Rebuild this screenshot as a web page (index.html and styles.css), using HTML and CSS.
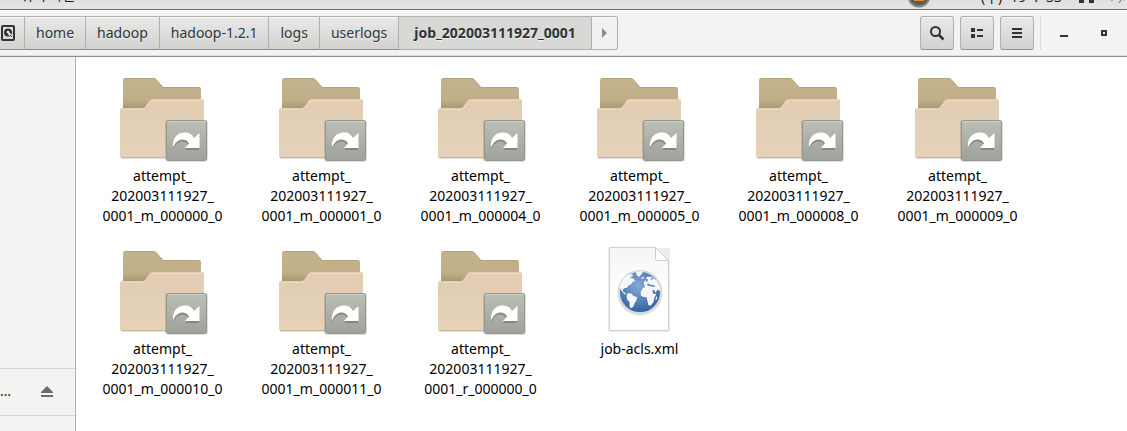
FILE: index.html
```html
<!DOCTYPE html>
<html lang="ko">
<head>
<meta charset="utf-8">
<title>job_202003111927_0001</title>
<link rel="stylesheet" href="styles.css">
</head>
<body>
<svg class="defs" aria-hidden="true">
  <defs>
    <linearGradient id="back" x1="0" y1="0" x2="0" y2="1"><stop offset="0" stop-color="#c5b38e"/><stop offset=".65" stop-color="#bfae88"/><stop offset="1" stop-color="#a08d69"/></linearGradient>
    <linearGradient id="front" x1="0" y1="0" x2="0" y2="1"><stop offset="0" stop-color="#e2cdb3"/><stop offset="1" stop-color="#e5d2b8"/></linearGradient>
    <linearGradient id="badge" x1="0" y1="0" x2="0" y2="1"><stop offset="0" stop-color="#bbbfb6"/><stop offset="1" stop-color="#9fa29a"/></linearGradient>
    <linearGradient id="paper" x1="0" y1="0" x2="0" y2="1"><stop offset="0" stop-color="#f5f5f4"/><stop offset=".6" stop-color="#ffffff"/></linearGradient>
    <radialGradient id="sea" cx=".45" cy=".35" r=".7"><stop offset="0" stop-color="#84aad8"/><stop offset="1" stop-color="#2b5c9c"/></radialGradient>
    <symbol id="folder" viewBox="0 0 96 96">
      <rect x="6" y="86" width="83" height="3" rx="1" fill="#000" opacity=".12"/>
      <path d="M8 42V10q0-2 2-2h28q2 0 3 1l7 8h36q2 0 2 2v23z" fill="url(#back)"/>
      <path d="M10 8.500h28q2 0 3 1l7 8h36" fill="none" stroke="#b3a27d"/>
      <path d="M5 86V40q0-2 2-2h20q2 0 3-1l5-7q1-1 3-1h49q2 0 2 2v55q0 2-2 2H7q-2 0-2-2z" fill="url(#front)"/>
      <path d="M6 87.500h82" stroke="#cbb597"/>
      <path d="M6 39.500h21q3 0 4-2l5-6q1-1 3-1h48" fill="none" stroke="#ead9c2"/>
      <rect x="50" y="50" width="43" height="42" rx="3" fill="#000" opacity=".12"/>
      <rect x="51.500" y="50.500" width="40" height="40" rx="2" fill="url(#badge)" stroke="#92968d"/>
      <path d="M53 51.500h37" stroke="#cfd2cb"/>
      <path d="M58 79c-1-9 4-15 11-16 5-.5 8 2 10 6l5-4v15H70l4-4c-3-6-11-7-16 3z" fill="#444" opacity=".35"/>
      <path d="M58 77.500c-1-9 4-14.500 11-15 5-.5 8 1.500 10 5.500l5.500-5V78H70l4-4.500c-3-6-12-6-16 4z" fill="#fff"/>
    </symbol>
  </defs>
</svg>
<div class="window">
  <header class="topbar">
    <span class="app">위치 파일</span>
    <svg class="app-logo" viewBox="0 0 24 24" aria-hidden="true"><circle cx="12" cy="12" r="10.500" fill="#5b5c5d" stroke="#888" stroke-width="2"/><path d="M5 8h14l-2 9H7z" fill="#e98e20"/></svg>
    <span class="clock"><span>(수)</span><span>19</span><span>:</span><span>33</span></span>
    <svg class="tray" viewBox="0 0 48 12" aria-hidden="true"><path d="M0 0h5v3H0zM10 0h5v3h-5z" fill="#2e3436"/><path d="M33 0v1M42 0l-2 3M44 0h1" stroke="#6c7071" stroke-width="1"/></svg>
  </header>
  <div class="toolbar">
    <nav class="path" aria-label="경로">
      <button class="crumb disk" aria-label="컴퓨터"><svg viewBox="0 0 16 16" width="16" height="16"><path d="M3 1h10q1 0 1 1v12q0 1-1 1H3q-1 0-1-1V2q0-1 1-1z" fill="none" stroke="#2e3436" stroke-width="2"/><circle cx="8" cy="7.500" r="4" fill="#2e3436"/><circle cx="8" cy="7" r="1.300" fill="#eee"/><path d="M8.500 8l3.500 4" stroke="#eee" stroke-width="2"/><path d="M10 10l2 2" stroke="#2e3436"/></svg></button>
      <button class="crumb">home</button>
      <button class="crumb">hadoop</button>
      <button class="crumb">hadoop-1.2.1</button>
      <button class="crumb">logs</button>
      <button class="crumb">userlogs</button>
      <button class="crumb current">job_202003111927_0001</button>
      <button class="crumb next" aria-label="다음"><svg viewBox="0 0 6 10" width="6" height="10"><path d="M0 0l5 5-5 5z" fill="#8b8e8f"/></svg></button>
    </nav>
    <div class="tools">
      <button class="tool" aria-label="검색"><svg viewBox="0 0 16 16" width="16" height="16"><circle cx="6.500" cy="6.500" r="4.500" fill="none" stroke="#2e3436" stroke-width="2"/><path d="M10 10l4.500 4.500" stroke="#2e3436" stroke-width="2.500"/></svg></button>
      <button class="tool" aria-label="보기"><svg viewBox="0 0 16 16" width="16" height="16"><path d="M2 3h4v4H2zM2 9h4v4H2zM8 4h6v2H8zM8 10h6v2H8z" fill="#2e3436"/></svg></button>
      <button class="tool" aria-label="메뉴"><svg viewBox="0 0 16 16" width="16" height="16"><path d="M3 3h10v2H3zM3 7h10v2H3zM3 11h10v2H3z" fill="#2e3436"/></svg></button>
    </div>
    <div class="controls">
      <button class="control" aria-label="최소화"><svg viewBox="0 0 16 16" width="16" height="16"><path d="M4 10h8v2H4z" fill="#2e3436"/></svg></button>
      <button class="control" aria-label="최대화"><svg viewBox="0 0 16 16" width="16" height="16"><path d="M6 6h4v4H6z" fill="none" stroke="#2e3436" stroke-width="2"/></svg></button>
    </div>
  </div>
  <div class="body">
    <aside class="sidebar">
      <div class="volume"><span>…</span><button class="eject" aria-label="꺼내기"><svg viewBox="0 0 12 11" width="12" height="11"><path d="M6 0l6 6v1H0V6zM0 9h12v2H0z" fill="#686c6d"/></svg></button></div>
    </aside>
    <main class="files">
      <figure class="file"><svg class="icon"><use href="#folder"/></svg><figcaption>attempt_<br>202003111927_<br>0001_m_000000_0</figcaption></figure>
      <figure class="file"><svg class="icon"><use href="#folder"/></svg><figcaption>attempt_<br>202003111927_<br>0001_m_000001_0</figcaption></figure>
      <figure class="file"><svg class="icon"><use href="#folder"/></svg><figcaption>attempt_<br>202003111927_<br>0001_m_000004_0</figcaption></figure>
      <figure class="file"><svg class="icon"><use href="#folder"/></svg><figcaption>attempt_<br>202003111927_<br>0001_m_000005_0</figcaption></figure>
      <figure class="file"><svg class="icon"><use href="#folder"/></svg><figcaption>attempt_<br>202003111927_<br>0001_m_000008_0</figcaption></figure>
      <figure class="file"><svg class="icon"><use href="#folder"/></svg><figcaption>attempt_<br>202003111927_<br>0001_m_000009_0</figcaption></figure>
      <figure class="file"><svg class="icon"><use href="#folder"/></svg><figcaption>attempt_<br>202003111927_<br>0001_m_000010_0</figcaption></figure>
      <figure class="file"><svg class="icon"><use href="#folder"/></svg><figcaption>attempt_<br>202003111927_<br>0001_m_000011_0</figcaption></figure>
      <figure class="file"><svg class="icon"><use href="#folder"/></svg><figcaption>attempt_<br>202003111927_<br>0001_r_000000_0</figcaption></figure>
      <figure class="file"><svg class="icon" viewBox="0 0 96 96">
        <rect x="16" y="5" width="62" height="84" rx="2" fill="#000" opacity=".07"/>
        <path d="M17.500 4.500h46l13 13v70h-59z" fill="url(#paper)" stroke="#cfcfce"/>
        <path d="M63.500 4.500v11q0 2 2 2h11z" fill="#fff" stroke="#cfcfce"/>
        <circle cx="48" cy="50" r="22.500" fill="#000" opacity=".12"/>
        <circle cx="48" cy="49" r="21" fill="url(#sea)" stroke="#d5d8dc" stroke-width="2"/>
        <g transform="translate(23 24) scale(.333)" fill="#f5f7f8">
          <path d="M14 62Q18 38 38 24l14-3 2 5-9 6 9 2 7 8-9 4-3 6-8 3-5 7-7 1-6 5 2 6 6 4 2 5-5-2-10-12z"/>
          <path d="M62 14l22-1-3 7-8 9-7-3zM79 32l6-3 3 4-7 3z"/>
          <path d="M38 78l12 2 6 7 11 4-3 10-5 7-4 11-7 5-4-4v-14l-8-9-1-10z"/>
          <path d="M86 46l7-8 3-9 14 0 16 12 9 19 1 12-9-4-5 9-4-8-6 1 3 11 9-1-6 13-2 11-9 12-7-2-2-9-3-14-9-1-8-4-1-11 6-11 7-3z"/>
          <path d="M99 49l6 4 9 1 7 3-3 3-14-3-9-3zM94 36l5 1-2 7-5 0zM110 31l5 4-8 5z" fill="#5985bb"/>
          <path d="M124 88l3 3-3 9-3-2z"/>
        </g>
      </svg><figcaption>job-acls.xml</figcaption></figure>
    </main>
  </div>
</div>
</body>
</html>
```
FILE: styles.css
```css
* { box-sizing: border-box; }
body { margin: 0; background: #fff; color: #1c1f20; font: 14px/20px "Noto Sans", "Noto Sans CJK KR", sans-serif; }
button { font: inherit; color: #2e3436; margin: 0; padding: 0; border: 0; background: none; }
svg { display: block; flex: none; }
.defs { position: absolute; width: 0; height: 0; }
.window { min-height: 100vh; display: flex; flex-direction: column; }
.topbar { height: 10px; overflow: hidden; display: flex; align-items: flex-end; background: linear-gradient(#e0e0e0, #e5e5e5); border-bottom: 1px solid #6b6c69; line-height: 14px; }
.app { flex: 1; padding: 0 0 7px 20px; }
.app-logo { width: 24px; height: 24px; margin-right: 50px; margin-bottom: 1px; }
.clock { display: flex; gap: 8px; width: 98px; padding-bottom: 5px; }
.tray { width: 48px; height: 12px; margin-bottom: -3px; }
.toolbar { height: 47px; display: flex; align-items: center; background: #f3f3f3; border-bottom: 1px solid #8f8f8a; box-shadow: inset 0 1px #fff, inset 0 -1px #dededb; }
.path { display: flex; flex: 1; }
.crumb { height: 34px; padding: 0 11px; border: solid #b0b0ad; border-width: 1px 1px 1px 0; border-bottom-color: #8f8f8a; background: linear-gradient(#e9e9e8, #d2d2d0); text-shadow: 0 1px #f0f0f0; box-shadow: inset 0 1px #f6f6f5; }
.disk { padding: 0 8px 0 0; }
.current { padding: 0 15px; font-weight: bold; background: #d8d8d7; border-bottom-color: #b0b0ad; box-shadow: none; }
.next { padding: 0 9px 0 10px; background: #f1f1f1; border-bottom-color: #b0b0ad; border-radius: 0 3px 3px 0; }
.tools { display: flex; gap: 6px; padding-right: 6px; }
.tool { width: 34px; height: 34px; display: grid; place-items: center; border: 1px solid #b0b0ad; border-bottom-color: #8f8f8a; border-radius: 3px; background: linear-gradient(#e9e9e8, #d2d2d0); box-shadow: inset 0 1px #f6f6f5; }
.controls { display: flex; gap: 24px; height: 34px; align-items: center; padding: 0 15px; border-left: 1px solid #dadad8; }
.body { flex: 1; display: flex; }
.sidebar { width: 76px; flex: none; display: flex; flex-direction: column; justify-content: flex-end; padding-bottom: 15px; background: #f3f3f1; border-right: 1px solid #b0b0ad; }
.volume { height: 48px; display: flex; align-items: center; justify-content: space-between; padding: 0 22px 2px 0; border: solid #d5d5d3; border-width: 1px 0; }
.files { flex: 1; display: grid; grid-template-columns: repeat(auto-fill, 159px); grid-auto-rows: 173px; align-content: start; padding: 13px 7px 0; }
.file { margin: 0; display: flex; flex-direction: column; align-items: center; color: #000; text-align: center; }
.icon { width: 96px; height: 96px; }
```
